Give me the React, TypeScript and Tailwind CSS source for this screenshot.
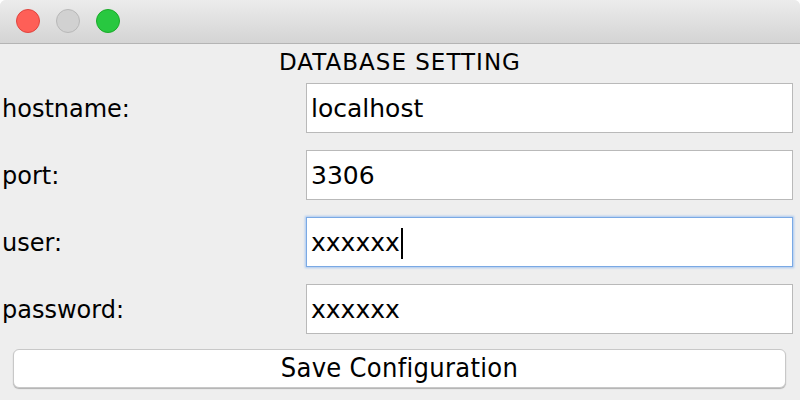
import React from "react";

const fields = [
  { label: "hostname:", value: "localhost" },
  { label: "port:", value: "3306" },
  { label: "user:", value: "xxxxxx", focused: true },
  { label: "password:", value: "xxxxxx" },
];

export default function App() {
  return (
    <div className="w-[800px] h-[400px] bg-[#eeeeee] rounded-t-[6px] overflow-hidden font-['DejaVu_Sans',sans-serif] text-black">
      {/* Title bar */}
      <div className="h-[44px] flex items-center gap-[16px] pl-[16px] pb-[1px] border-b border-[#b4b4b4] bg-gradient-to-b from-[#ececec] to-[#d4d4d4]">
        <span className="w-[24px] h-[24px] rounded-full bg-[#fe5f57] border border-[#e0443e]" />
        <span className="w-[24px] h-[24px] rounded-full bg-[#d1d1d1] border border-[#b8b8b8]" />
        <span className="w-[24px] h-[24px] rounded-full bg-[#28c840] border border-[#1aab29]" />
      </div>

      {/* Heading */}
      <div className="h-[39px] leading-[36px] text-center text-[23px] tracking-[1px]">
        DATABASE SETTING
      </div>

      {/* Form rows */}
      <div className="flex flex-col gap-[17px]">
        {fields.map((f) => (
          <div key={f.label} className="flex items-center h-[50px]">
            <div className="flex-1 pl-[2px] pt-[2px] text-[24px]">{f.label}</div>
            <div
              className={
                f.focused
                  ? "w-[487px] h-[50px] mr-[7px] bg-white border border-[#7aa9e4] shadow-[0_0_2px_1px_#a9c8f0] flex items-center pl-[4px] pt-[2px] text-[25px]"
                  : "w-[487px] h-[50px] mr-[7px] bg-white border border-[#b9b9b9] flex items-center pl-[4px] pt-[2px] text-[25px]"
              }
            >
              <span>{f.value}</span>
              {f.focused && <span className="w-[2px] h-[31px] bg-black ml-[1px]" />}
            </div>
          </div>
        ))}
      </div>

      {/* Save button */}
      <div className="mt-[15px] mx-[13px] w-[773px] h-[39px] bg-white rounded-[6px] border border-[#c8c8c8] shadow-[0_1px_1px_#b0b0b0] flex items-center justify-center">
        <span className="text-[27px] tracking-[0.3px] font-['DejaVu_Sans_Condensed','DejaVu_Sans',sans-serif] [font-stretch:condensed]">
          Save Configuration
        </span>
      </div>
    </div>
  );
}
